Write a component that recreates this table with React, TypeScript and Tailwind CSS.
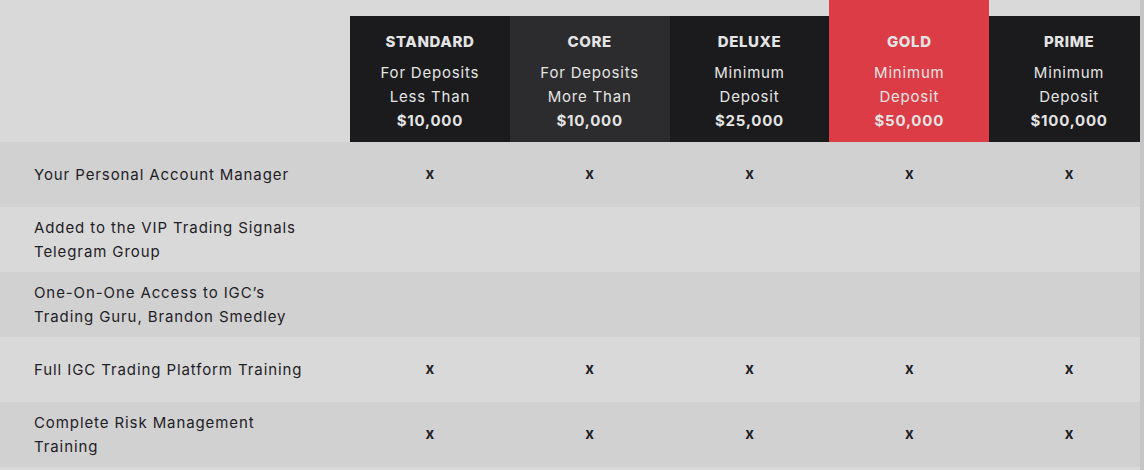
import React from "react";

const plans = [
  { name: "STANDARD", l1: "For Deposits", l2: "Less Than", amt: "$10,000", bg: "bg-[#1b1b1d]", top: true },
  { name: "CORE", l1: "For Deposits", l2: "More Than", amt: "$10,000", bg: "bg-[#2c2c2e]", top: true },
  { name: "DELUXE", l1: "Minimum", l2: "Deposit", amt: "$25,000", bg: "bg-[#1b1b1d]", top: true },
  { name: "GOLD", l1: "Minimum", l2: "Deposit", amt: "$50,000", bg: "bg-[#db3c46]", top: false },
  { name: "PRIME", l1: "Minimum", l2: "Deposit", amt: "$100,000", bg: "bg-[#1b1b1d]", top: true },
];

const rows: { label: string[]; x: boolean }[] = [
  { label: ["Your Personal Account Manager"], x: true },
  { label: ["Added to the VIP Trading Signals", "Telegram Group"], x: false },
  { label: ["One-On-One Access to IGC\u2019s", "Trading Guru, Brandon Smedley"], x: false },
  { label: ["Full IGC Trading Platform Training"], x: true },
  { label: ["Complete Risk Management", "Training"], x: true },
];

const font = { fontFamily: "Inter, 'Open Sans', sans-serif" };

export default function App() {
  return (
    <div className="flex w-[1144px] h-[470px] bg-[#d9d9d9] overflow-hidden" style={font}>
      <div className="w-[1140px] overflow-hidden">
        <div className="w-[1150px]">
          <div className="flex h-[142px]">
            <div className="w-[350px] shrink-0" />
            {plans.map((p) => (
              <div key={p.name} className={`w-[159.8px] shrink-0 flex flex-col ${p.top ? "pt-[16px]" : ""}`}>
                <div className={`flex-1 ${p.bg} flex flex-col items-center text-[#e4e4e4] tracking-[0.8px] ${p.top ? "pt-[14px]" : "pt-[30px]"}`}>
                  <div className="text-[15px] font-extrabold leading-[24px] mb-[7px] tracking-[0.6px]">{p.name}</div>
                  <div className="text-[15px] leading-[24px]">{p.l1}</div>
                  <div className="text-[15px] leading-[24px]">{p.l2}</div>
                  <div className="text-[15px] font-bold leading-[24px]">{p.amt}</div>
                </div>
              </div>
            ))}
          </div>
          {rows.map((r, i) => (
            <div key={i} className={`flex h-[65px] items-center ${i % 2 === 0 ? "bg-[#d1d1d1]" : "bg-[#d9d9d9]"}`}>
              <div className="w-[350px] shrink-0 pl-[34px] text-[15px] leading-[24px] text-[#1f2127] tracking-[0.9px]">
                {r.label.map((l) => (
                  <div key={l}>{l}</div>
                ))}
              </div>
              {plans.map((p) => (
                <div key={p.name} className="w-[159.8px] shrink-0 text-center text-[15px] font-bold text-[#1f2127]">
                  {r.x ? "x" : ""}
                </div>
              ))}
            </div>
          ))}
        </div>
      </div>
      <div className="w-[4px] bg-[#c5c5c5]" />
    </div>
  );
}
